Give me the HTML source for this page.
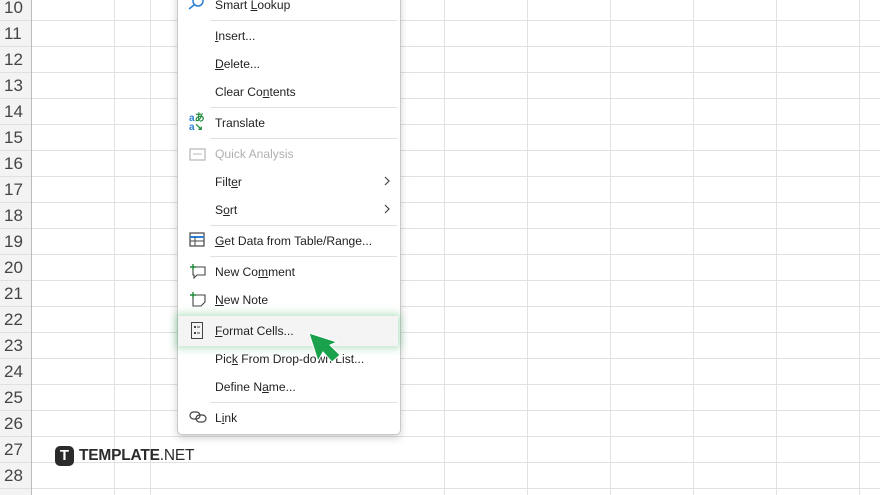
<!DOCTYPE html>
<html><head><style>
body{margin:0;width:880px;height:495px;overflow:hidden;background:#fff;font-family:"Liberation Sans",Arial,sans-serif;position:relative}
.hl{position:absolute;left:0;width:880px;height:1px;background:#e1e1e1}
.vl{position:absolute;top:0;width:1px;height:495px;background:#e1e1e1}
.rh{position:absolute;left:0;width:31px;background:#f3f3f3;height:495px;top:0;border-right:1px solid #bdbdbd}
.rn{position:absolute;left:4px;font-size:17px;color:#444}
.menu{position:absolute;left:177px;top:-10px;width:222px;height:443px;background:#fff;border:1px solid #c8c8c8;border-radius:0 0 5px 5px;box-shadow:0 3px 8px rgba(0,0,0,.18)}
.it{position:absolute;left:215px;font-size:12.1px;color:#222;line-height:16px}
.sep{position:absolute;left:210px;width:187px;height:1px;background:#e0e0e0}
.chev{position:absolute;left:384px}
u{text-decoration:underline}
</style></head><body>
<div class="rh"></div>
<div class="hl" style="top:20px"></div><div class="hl" style="top:46px"></div><div class="hl" style="top:72px"></div><div class="hl" style="top:98px"></div><div class="hl" style="top:124px"></div><div class="hl" style="top:150px"></div><div class="hl" style="top:176px"></div><div class="hl" style="top:202px"></div><div class="hl" style="top:228px"></div><div class="hl" style="top:254px"></div><div class="hl" style="top:280px"></div><div class="hl" style="top:306px"></div><div class="hl" style="top:332px"></div><div class="hl" style="top:358px"></div><div class="hl" style="top:384px"></div><div class="hl" style="top:410px"></div><div class="hl" style="top:436px"></div><div class="hl" style="top:462px"></div><div class="hl" style="top:488px"></div>
<div class="vl" style="left:114px"></div><div class="vl" style="left:150px"></div><div class="vl" style="left:444px"></div><div class="vl" style="left:527px"></div><div class="vl" style="left:610px"></div><div class="vl" style="left:693px"></div><div class="vl" style="left:776px"></div><div class="vl" style="left:859px"></div>
<div class="vl" style="left:31px;background:#bdbdbd"></div>
<div class="rn" style="top:-2px">10</div><div class="rn" style="top:24px">11</div><div class="rn" style="top:50px">12</div><div class="rn" style="top:76px">13</div><div class="rn" style="top:102px">14</div><div class="rn" style="top:128px">15</div><div class="rn" style="top:154px">16</div><div class="rn" style="top:180px">17</div><div class="rn" style="top:206px">18</div><div class="rn" style="top:232px">19</div><div class="rn" style="top:258px">20</div><div class="rn" style="top:284px">21</div><div class="rn" style="top:310px">22</div><div class="rn" style="top:336px">23</div><div class="rn" style="top:362px">24</div><div class="rn" style="top:388px">25</div><div class="rn" style="top:414px">26</div><div class="rn" style="top:440px">27</div><div class="rn" style="top:466px">28</div>

<div style="position:absolute;left:55px;top:446px;width:19px;height:20px;background:#2b2b2b;border-radius:5px;color:#fff;font-weight:bold;font-size:15px;text-align:center;line-height:20px">T</div>
<div style="position:absolute;left:79px;top:446px;font-size:15.5px;color:#2b2b2b;line-height:20px;letter-spacing:-0.2px"><b>TEMPLATE</b>.NET</div>

<div class="menu"></div>
<div style="position:absolute;left:178px;top:316px;width:220px;height:30px;background:#f4f4f4;box-shadow:0 0 8px 2px rgba(40,170,80,.35)"></div>

<svg style="position:absolute;left:188px;top:-4px" width="18" height="16"><circle cx="10" cy="5" r="5" fill="none" stroke="#2a7fd4" stroke-width="1.5"/><line x1="6" y1="9" x2="1" y2="13" stroke="#2a7fd4" stroke-width="1.5"/></svg>
<div class="it" style="top:-3px">Smart <u>L</u>ookup</div>
<div class="sep" style="top:20px"></div>
<div class="it" style="top:28px"><u>I</u>nsert...</div>
<div class="it" style="top:56px"><u>D</u>elete...</div>
<div class="it" style="top:84px">Clear Co<u>n</u>tents</div>
<div class="sep" style="top:107px"></div>
<div style="position:absolute;left:189px;top:114px;font-size:10px;font-weight:bold;line-height:9px"><span style="color:#2a7fd4">a</span><span style="color:#1e8a3c">あ</span><br><span style="color:#2a7fd4">a</span><span style="color:#1e8a3c">↘</span></div>
<div class="it" style="top:115px">Translate</div>
<div class="sep" style="top:138px"></div>
<svg style="position:absolute;left:189px;top:146px" width="18" height="16"><rect x="1" y="3" width="15" height="11" fill="none" stroke="#bbb" stroke-width="1.3"/><line x1="4" y1="8" x2="13" y2="8" stroke="#bbb"/></svg>
<div class="it" style="top:146px;color:#b0b0b0">Quick Analysis</div>
<div class="it" style="top:174px">Filt<u>e</u>r</div><svg class="chev" style="top:176px" width="6" height="10"><path d="M1 1L5 5L1 9" fill="none" stroke="#444" stroke-width="1.2"/></svg>
<div class="it" style="top:202px">S<u>o</u>rt</div><svg class="chev" style="top:204px" width="6" height="10"><path d="M1 1L5 5L1 9" fill="none" stroke="#444" stroke-width="1.2"/></svg>
<div class="sep" style="top:225px"></div>
<svg style="position:absolute;left:189px;top:232px" width="18" height="16"><rect x="1" y="1" width="14" height="13" fill="none" stroke="#444" stroke-width="1.2"/><line x1="1" y1="5" x2="15" y2="5" stroke="#2a7fd4" stroke-width="2"/><line x1="1" y1="9" x2="15" y2="9" stroke="#444"/><line x1="6" y1="5" x2="6" y2="14" stroke="#444"/></svg>
<div class="it" style="top:233px"><u>G</u>et Data from Table/Range...</div>
<div class="sep" style="top:256px"></div>
<svg style="position:absolute;left:189px;top:263px" width="18" height="16"><path d="M4 4H16V12H8L5 15V12H4Z" fill="none" stroke="#444" stroke-width="1.1"/><path d="M4 1V7M1 4H7" stroke="#1e8a3c" stroke-width="1.4"/></svg>
<div class="it" style="top:264px">New Co<u>m</u>ment</div>
<svg style="position:absolute;left:189px;top:291px" width="18" height="16"><path d="M4 4H16V11L12 15H4Z" fill="none" stroke="#444" stroke-width="1.1"/><path d="M4 1V7M1 4H7" stroke="#1e8a3c" stroke-width="1.4"/></svg>
<div class="it" style="top:292px"><u>N</u>ew Note</div>
<svg style="position:absolute;left:191px;top:322px" width="12" height="18"><rect x="0.5" y="0.5" width="11" height="16" fill="none" stroke="#444"/><rect x="3" y="4" width="2" height="2" fill="#444"/><rect x="3" y="10" width="2" height="2" fill="#444"/><line x1="6" y1="5" x2="9" y2="5" stroke="#444"/><line x1="6" y1="11" x2="9" y2="11" stroke="#444"/></svg>
<div class="it" style="top:323px"><u>F</u>ormat Cells...</div>
<div class="it" style="top:351px">Pic<u>k</u> From Drop-down List...</div>
<div class="it" style="top:379px">Define N<u>a</u>me...</div>
<div class="sep" style="top:402px"></div>
<svg style="position:absolute;left:189px;top:410px" width="18" height="14"><rect x="1" y="2" width="10" height="7" rx="3.5" fill="none" stroke="#444" stroke-width="1.2"/><rect x="7" y="5" width="10" height="7" rx="3.5" fill="none" stroke="#444" stroke-width="1.2"/></svg>
<div class="it" style="top:410px">L<u>i</u>nk</div>

<svg style="position:absolute;left:300px;top:325px" width="45" height="45"><path d="M9 8L37 17L30 20L40 30L32 37L23 27L18 36Z" fill="#1aa14c" stroke="#fff" stroke-width="1"/></svg>
</body></html>
